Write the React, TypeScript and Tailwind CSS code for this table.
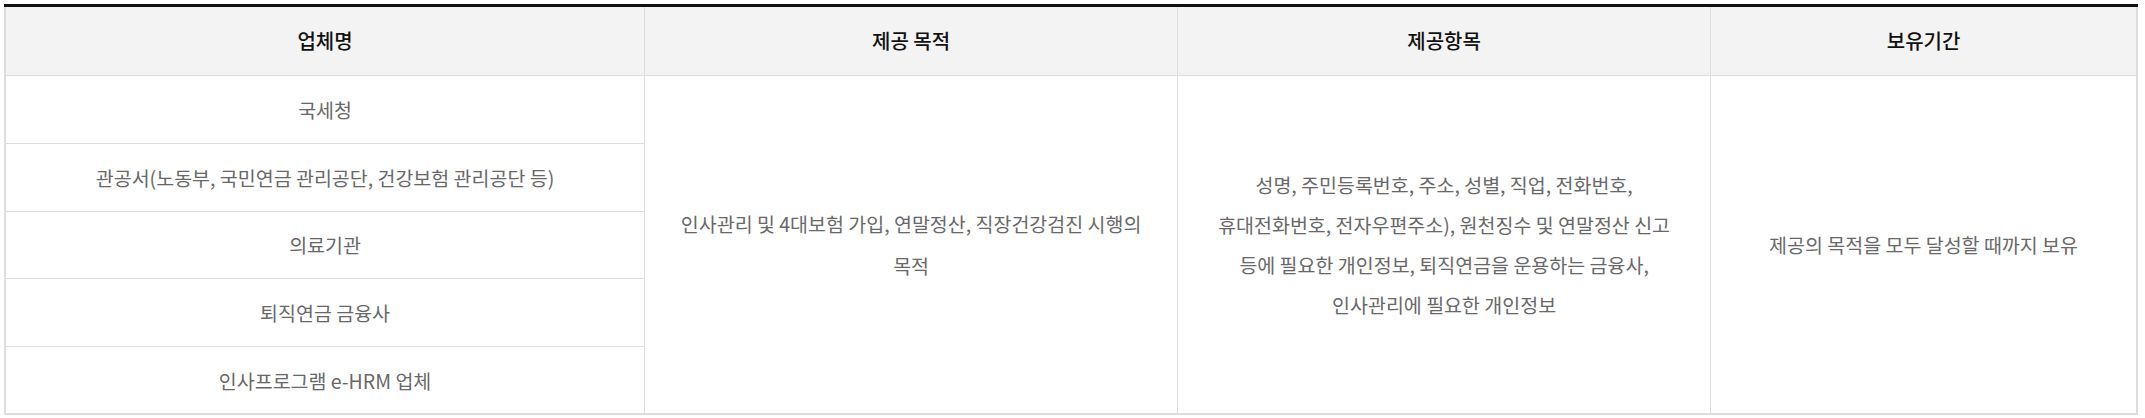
const companies = [
  "국세청",
  "관공서(노동부, 국민연금 관리공단, 건강보험 관리공단 등)",
  "의료기관",
  "퇴직연금 금융사",
  "인사프로그램 e-HRM 업체",
];

const App = () => {
  return (
    <div className="w-[2145px] h-[418px] bg-white pl-[4px] pr-[7px] pt-[4px] font-['Noto_Sans_CJK_KR','Noto_Sans',sans-serif]">
      <table className="w-full table-fixed border-collapse border-2 border-[#dddddd] border-t-[3px] border-t-[#111111]">
        <colgroup>
          <col className="w-[30%]" />
          <col className="w-[25%]" />
          <col className="w-[25%]" />
          <col className="w-[20%]" />
        </colgroup>
        <thead>
          <tr className="h-[70px] bg-[#f3f3f3]">
            <th className="border border-[#dddddd] border-t-[#111111] text-[20px] font-medium text-[#111111]">업체명</th>
            <th className="border border-[#dddddd] border-t-[#111111] text-[20px] font-medium text-[#111111]">제공 목적</th>
            <th className="border border-[#dddddd] border-t-[#111111] text-[20px] font-medium text-[#111111]">제공항목</th>
            <th className="border border-[#dddddd] border-t-[#111111] text-[20px] font-medium text-[#111111]">보유기간</th>
          </tr>
        </thead>
        <tbody className="text-[19.5px] text-[#686868] text-center">
          {companies.map((name, i) => (
            <tr key={name} className="h-[67.8px]">
              <td className="border border-[#dddddd] px-4">{name}</td>
              {i === 0 && (
                <>
                  <td rowSpan={5} className="border border-[#dddddd] px-[25px] leading-[42px]">
                    인사관리 및 4대보험 가입, 연말정산, 직장건강검진 시행의 목적
                  </td>
                  <td rowSpan={5} className="border border-[#dddddd] px-5 leading-[40px]">
                    성명, 주민등록번호, 주소, 성별, 직업, 전화번호,
                    <br />
                    휴대전화번호, 전자우편주소), 원천징수 및 연말정산 신고
                    <br />
                    등에 필요한 개인정보, 퇴직연금을 운용하는 금융사,
                    <br />
                    인사관리에 필요한 개인정보
                  </td>
                  <td rowSpan={5} className="border border-[#dddddd] px-4">
                    제공의 목적을 모두 달성할 때까지 보유
                  </td>
                </>
              )}
            </tr>
          ))}
        </tbody>
      </table>
    </div>
  );
};

export default App;
